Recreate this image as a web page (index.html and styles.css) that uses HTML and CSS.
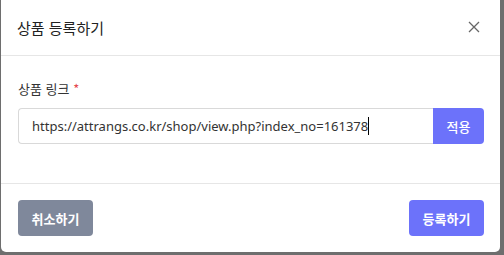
FILE: index.html
```html
<!DOCTYPE html>
<html lang="ko">
<head>
<meta charset="utf-8">
<link rel="stylesheet" href="styles.css">
</head>
<body>
<div class="modal">
  <div class="modal-header">
    <h2 class="modal-title">상품 등록하기</h2>
    <button class="close" aria-label="닫기">
      <svg width="12" height="12" viewBox="0 0 12 12"><path d="M1 1L11 11M11 1L1 11" stroke="#666" stroke-width="1.3" fill="none"/></svg>
    </button>
  </div>
  <div class="modal-body">
    <label class="label">상품 링크 <span class="req">*</span></label>
    <div class="input-group">
      <div class="input">https://attrangs.co.kr/shop/view.php?index_no=161378<span class="caret"></span></div>
      <button class="btn btn-primary btn-apply">적용</button>
    </div>
  </div>
  <div class="modal-footer">
    <button class="btn btn-secondary">취소하기</button>
    <button class="btn btn-primary">등록하기</button>
  </div>
</div>
</body>
</html>
```
FILE: styles.css
```css
html, body {
  margin: 0;
  padding: 0;
  background: #6e6e6e;
  height: 255px;
  overflow: hidden;
}
body {
  font-family: "Noto Sans CJK KR", "Noto Sans", sans-serif;
  padding-left: 1px;
}
.modal {
  width: 499px;
  height: 252px;
  background: #fff;
  border-radius: 0 0 5px 5px;
  display: flex;
  flex-direction: column;
  box-sizing: border-box;
}
.modal-header {
  height: 56px;
  box-sizing: border-box;
  border-bottom: 1px solid #e6e6e6;
  display: flex;
  align-items: center;
  justify-content: space-between;
  padding: 0 16px 0 16px;
}
.modal-title {
  margin: 0;
  font-size: 15px;
  font-weight: 400;
  color: #222;
  line-height: 1;
}
.close {
  border: 0;
  background: none;
  padding: 0;
  width: 20px;
  height: 20px;
  display: flex;
  align-items: center;
  justify-content: center;
  margin-top: -1px;
}
.modal-body {
  padding: 24px 16px 0 17px;
  height: 128px;
  box-sizing: border-box;
  border-bottom: 1px solid #e6e6e6;
}
.label {
  display: block;
  font-size: 13px;
  color: #333;
  line-height: 18px;
  margin-bottom: 10px;
}
.req { color: #e5484d; }
.input-group {
  display: flex;
  height: 36px;
  width: 466px;
}
.input {
  flex: 1;
  border: 1px solid #d9d9d9;
  border-right: 0;
  border-radius: 4px 0 0 4px;
  font-family: "Noto Sans", sans-serif;
  font-size: 13px;
  color: #333;
  display: flex;
  align-items: center;
  padding-left: 13px;
  white-space: nowrap;
}
.caret {
  display: inline-block;
  width: 1px;
  height: 18px;
  background: #000;
}
.btn {
  border: 0;
  border-radius: 4px;
  font-family: "Noto Sans CJK KR", sans-serif;
  font-size: 13px;
  font-weight: 700;
  color: #fff;
  height: 36px;
  cursor: pointer;
}
.btn-primary { background: #6c72fa; }
.btn-secondary { background: #7f889b; }
.btn-apply {
  width: 51px;
  border-radius: 0 4px 4px 0;
  font-weight: 500;
}
.modal-footer {
  flex: 1;
  display: flex;
  justify-content: space-between;
  align-items: flex-start;
  padding: 16px 16px 0 17px;
}
.modal-footer .btn { width: 75px; }
```
